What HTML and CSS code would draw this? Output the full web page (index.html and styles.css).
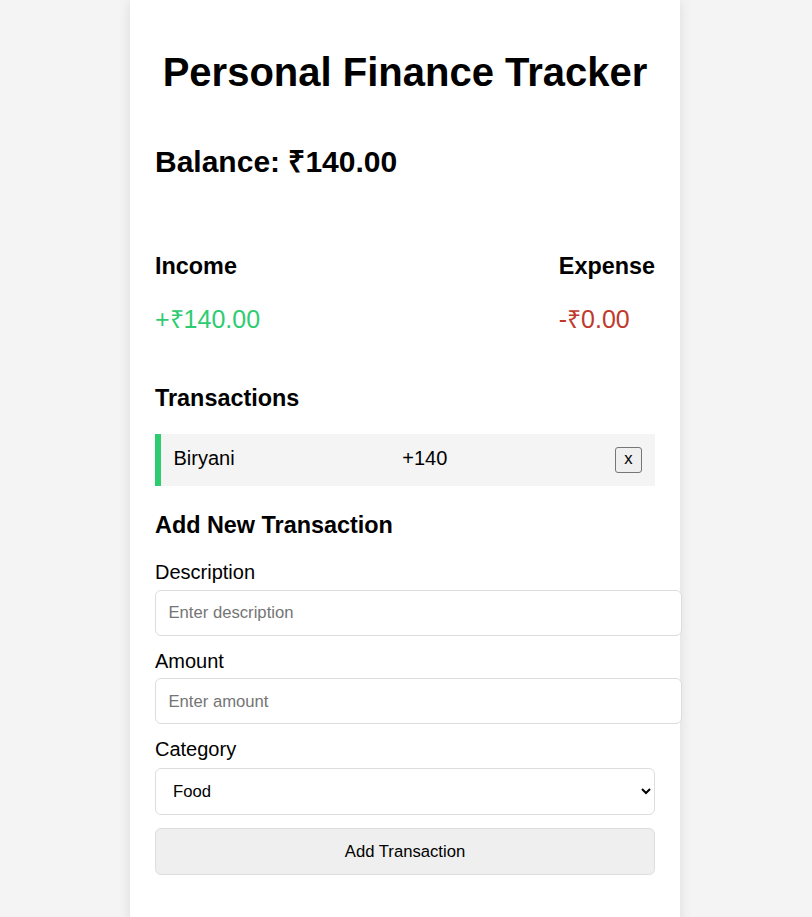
FILE: index.html
```html
<!DOCTYPE html>
<html lang="en">
<head>
<meta charset="utf-8">
<title>Personal Finance Tracker</title>
<link rel="stylesheet" href="styles.css">
</head>
<body>
<div class="container">
  <h1 class="title">Personal Finance Tracker</h1>
  <h2 class="balance">Balance: ₹140.00</h2>
  <div class="summary">
    <div class="summary-col">
      <h3 class="section">Income</h3>
      <p class="money plus">+₹140.00</p>
    </div>
    <div class="summary-col">
      <h3 class="section">Expense</h3>
      <p class="money minus">-₹0.00</p>
    </div>
  </div>
  <h3 class="section tx-title">Transactions</h3>
  <ul class="list">
    <li class="item item-plus">
      <span class="item-desc">Biryani</span>
      <span class="item-amt">+140</span>
      <button class="delete">x</button>
    </li>
  </ul>
  <h3 class="section add-title">Add New Transaction</h3>
  <form class="form">
    <label class="label first">Description</label>
    <input class="field" type="text" placeholder="Enter description">
    <label class="label">Amount</label>
    <input class="field" type="number" placeholder="Enter amount">
    <label class="label">Category</label>
    <select class="select">
      <option>Food</option>
    </select>
    <button class="submit" type="button">Add Transaction</button>
  </form>
</div>
</body>
</html>
```

FILE: styles.css
```css
html, body {
  margin: 0;
  padding: 0;
}
body {
  background: #f4f4f4;
  font-family: "Liberation Sans", Arial, sans-serif;
  font-size: 20px;
  color: #000;
}
.container {
  width: 500px;
  margin: 0 auto;
  padding: 25px 25px 60px;
  background: #fff;
  box-shadow: 0 0 12px rgba(0, 0, 0, 0.1);
  position: relative;
  left: -1px;
}
.title {
  margin: 25px 0 0;
  font-size: 40px;
  font-weight: bold;
  text-align: center;
}
.balance {
  margin: 45px 0 0;
  font-size: 30px;
  font-weight: bold;
}
.summary {
  display: flex;
  justify-content: space-between;
  margin-top: 72px;
}
.section {
  margin: 0;
  font-size: 23.4px;
  font-weight: bold;
}
.money {
  margin: 21px 0 0;
  font-size: 25px;
}
.plus { color: #2ecc71; }
.minus { color: #c0392b; }
.tx-title {
  margin-top: 49.5px;
}
.list {
  list-style: none;
  margin: 22.5px 0 0;
  padding: 0;
}
.item {
  display: flex;
  justify-content: space-between;
  align-items: center;
  box-sizing: border-box;
  height: 52px;
  padding: 0 13px 0 12.5px;
  background: #f4f4f4;
  border-left: 6px solid #2ecc71;
}
.item-desc, .item-amt {
  font-size: 20px;
  margin-bottom: 4px;
}
.delete {
  font-family: "Liberation Sans", Arial, sans-serif;
  font-size: 16.67px;
  background: #efefef;
  border: 1px solid #767676;
  border-radius: 3px;
  padding: 1px 7px 2px;
  height: 26px;
  width: 27px;
  color: #000;
  line-height: 1;
}
.add-title {
  margin-top: 26px;
}
.form {
  display: flex;
  flex-direction: column;
  align-items: flex-start;
}
.label {
  display: block;
  margin-top: 14px;
  font-size: 20px;
  line-height: 23px;
}
.label.first {
  margin-top: 22px;
}
.field {
  margin-top: 5.5px;
  width: 500px;
  padding: 12.5px;
  border: 1px solid #ddd;
  border-radius: 6px;
  font-family: "Liberation Sans", Arial, sans-serif;
  font-size: 16.67px;
  line-height: 19px;
  color: #000;
  background: #fff;
}
.field::placeholder {
  color: #757575;
}
.select {
  margin-top: 7px;
  box-sizing: border-box;
  width: 500px;
  height: 47px;
  padding: 0 10px 0 13px;
  border: 1px solid #ddd;
  border-radius: 6px;
  font-family: "Liberation Sans", Arial, sans-serif;
  font-size: 16.67px;
  color: #000;
  background: #fff;
}
.submit {
  margin-top: 13px;
  box-sizing: border-box;
  width: 500px;
  height: 47px;
  border: 1px solid #ddd;
  border-radius: 6px;
  background: #efefef;
  font-family: "Liberation Sans", Arial, sans-serif;
  font-size: 16.67px;
  color: #000;
}
```
